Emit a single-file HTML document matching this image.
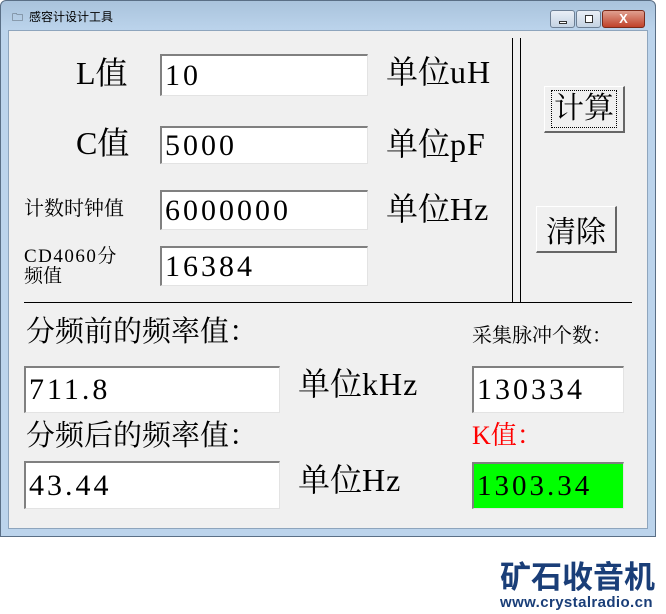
<!DOCTYPE html>
<html><head><meta charset="utf-8"><style>
*{margin:0;padding:0;box-sizing:border-box}
body{width:666px;height:614px;background:#fff;position:relative;overflow:hidden;font-family:"Liberation Serif","Noto Serif CJK SC",serif;color:#000}
.win{position:absolute;left:0;top:0;width:656px;height:537px;background:linear-gradient(#a9c3dc,#bcd4ec 30px,#bcd4ec);border:1px solid #5a6f86;border-radius:6px 6px 0 0}
.cl{position:absolute;left:8px;top:30px;width:640px;height:499px;background:#f0f0f0;border:1px solid #8ea5bd}
.t{position:absolute;white-space:nowrap;line-height:1}
.l{letter-spacing:1px}
.box{position:absolute;background:#fff;border-top:2px solid #808080;border-left:2px solid #808080;border-right:1px solid #e3e3e3;border-bottom:1px solid #e3e3e3;font-size:30px;padding-left:3px;display:flex;align-items:center;letter-spacing:3px}
.btn{position:absolute;background:#f0f0f0;border:1px solid #fff;border-right:2px solid #666;border-bottom:2px solid #666;font-size:30px;display:flex;align-items:center;justify-content:center}
.tb{position:absolute;top:9px;height:18px;border:1px solid #6d7f94;border-radius:3px;background:linear-gradient(#e9eff6,#c5d3e3)}
</style></head><body>
<div class="win">
 <div class="t" style="left:11px;top:11px;font-size:11px;font-family:'Noto Sans CJK SC',sans-serif">🗀</div>
 <div class="t" style="left:28px;top:10px;font-size:12px;font-family:'Noto Sans CJK SC',sans-serif">感容计设计工具</div>
 <div class="tb" style="left:549px;width:25px"><div style="position:absolute;left:8px;top:10px;width:8px;height:3px;border:1px solid #333;background:#fff"></div></div>
 <div class="tb" style="left:575px;width:25px"><div style="position:absolute;left:8px;top:4px;width:8px;height:8px;border:1px solid #333;background:#fff"></div></div>
 <div class="tb" style="left:601px;width:43px;background:linear-gradient(#e0a090,#c0422a);border-color:#7a2a1a;color:#fff;font:bold 13px 'Liberation Sans',sans-serif;text-align:center;line-height:16px">X</div>
</div>
<div class="cl"></div>
<div class="t" style="left:76px;top:57px;font-size:32px">L值</div>
<div class="t" style="left:76px;top:127px;font-size:32px">C值</div>
<div class="t" style="left:24px;top:199px;font-size:20px">计数时钟值</div>
<div class="t" style="left:24px;top:247px;font-size:19px;line-height:20px"><span style="letter-spacing:1.5px">CD4060</span>分<br>频值</div>
<div class="box" style="left:160px;top:54px;width:208px;height:42px">10</div>
<div class="box" style="left:160px;top:126px;width:208px;height:38px">5000</div>
<div class="box" style="left:160px;top:190px;width:208px;height:40px">6000000</div>
<div class="box" style="left:160px;top:246px;width:208px;height:40px">16384</div>
<div class="t" style="left:386px;top:56px;font-size:32px">单位<span class="l">uH</span></div>
<div class="t" style="left:386px;top:128px;font-size:32px">单位<span class="l">pF</span></div>
<div class="t" style="left:386px;top:193px;font-size:32px">单位<span class="l">Hz</span></div>
<div style="position:absolute;left:512px;top:38px;width:1px;height:264px;background:#000"></div>
<div style="position:absolute;left:520px;top:38px;width:1px;height:264px;background:#000"></div>
<div style="position:absolute;left:24px;top:302px;width:608px;height:1px;background:#000"></div>
<div class="btn" style="left:544px;top:86px;width:81px;height:47px"><div style="border:1px dotted #000;padding:0 2px;line-height:36px">计算</div></div>
<div class="btn" style="left:536px;top:206px;width:81px;height:47px">清除</div>
<div class="t" style="left:26px;top:318px;font-size:29px">分频前的频率值：</div>
<div class="t" style="left:26px;top:422px;font-size:29px">分频后的频率值：</div>
<div class="box" style="left:24px;top:366px;width:256px;height:47px">711.8</div>
<div class="box" style="left:24px;top:461px;width:256px;height:48px">43.44</div>
<div class="t" style="left:298px;top:368px;font-size:32px">单位<span class="l">kHz</span></div>
<div class="t" style="left:298px;top:464px;font-size:32px">单位<span class="l">Hz</span></div>
<div class="t" style="left:472px;top:326px;font-size:20px">采集脉冲个数：</div>
<div class="box" style="left:472px;top:366px;width:152px;height:47px">130334</div>
<div class="t" style="left:472px;top:423px;font-size:26px;color:#f00">K值：</div>
<div class="box" style="left:472px;top:462px;width:152px;height:47px;background:#00ff00;font-size:29px">1303.34</div>
<div class="t" style="left:500px;top:552px;font:bold 31px 'Noto Sans CJK SC',sans-serif;color:#1a3e78">矿石收音机</div>
<div class="t" style="left:500px;top:594px;font:bold 15px 'Liberation Sans',sans-serif;color:#1a3e78;letter-spacing:0.4px">www.crystalradio.cn</div>
</body></html>
